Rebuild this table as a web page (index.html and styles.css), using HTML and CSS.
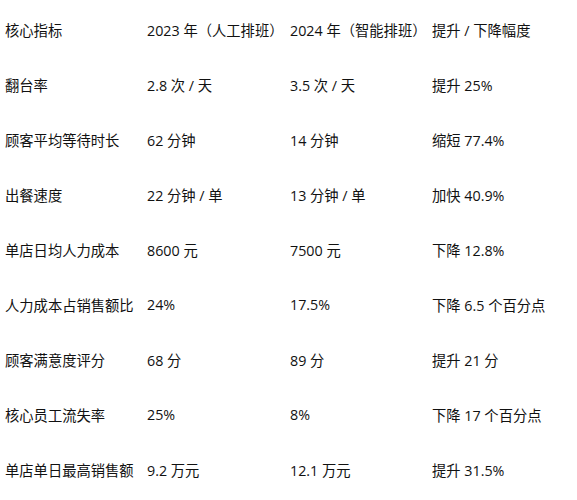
FILE: index.html
```html
<!DOCTYPE html>
<html lang="zh-CN">
<head>
<meta charset="utf-8">
<title>排班对比</title>
<link rel="stylesheet" href="styles.css">
</head>
<body>
<div class="table">
  <div class="row head"><span>核心指标</span><span>2023 年（人工排班）</span><span>2024 年（智能排班）</span><span>提升 / 下降幅度</span></div>
  <div class="row"><span>翻台率</span><span>2.8 次 / 天</span><span>3.5 次 / 天</span><span>提升 25%</span></div>
  <div class="row"><span>顾客平均等待时长</span><span>62 分钟</span><span>14 分钟</span><span>缩短 77.4%</span></div>
  <div class="row"><span>出餐速度</span><span>22 分钟 / 单</span><span>13 分钟 / 单</span><span>加快 40.9%</span></div>
  <div class="row"><span>单店日均人力成本</span><span>8600 元</span><span>7500 元</span><span>下降 12.8%</span></div>
  <div class="row"><span>人力成本占销售额比</span><span>24%</span><span>17.5%</span><span>下降 6.5 个百分点</span></div>
  <div class="row"><span>顾客满意度评分</span><span>68 分</span><span>89 分</span><span>提升 21 分</span></div>
  <div class="row"><span>核心员工流失率</span><span>25%</span><span>8%</span><span>下降 17 个百分点</span></div>
  <div class="row"><span>单店单日最高销售额</span><span>9.2 万元</span><span>12.1 万元</span><span>提升 31.5%</span></div>
</div>
</body>
</html>
```
FILE: styles.css
```css
html, body {
  margin: 0;
  padding: 0;
  background: #ffffff;
}
body {
  padding-top: 2px;
  font-family: "Open Sans", "Noto Sans CJK SC", sans-serif;
  font-size: 14.3px;
  color: #111111;
}
.table {
  display: flex;
  flex-direction: column;
}
.row {
  display: grid;
  grid-template-columns: 142px 143px 142px 1fr;
  height: 55px;
  align-items: center;
}
.row span {
  padding-left: 5px;
  white-space: nowrap;
}
```
